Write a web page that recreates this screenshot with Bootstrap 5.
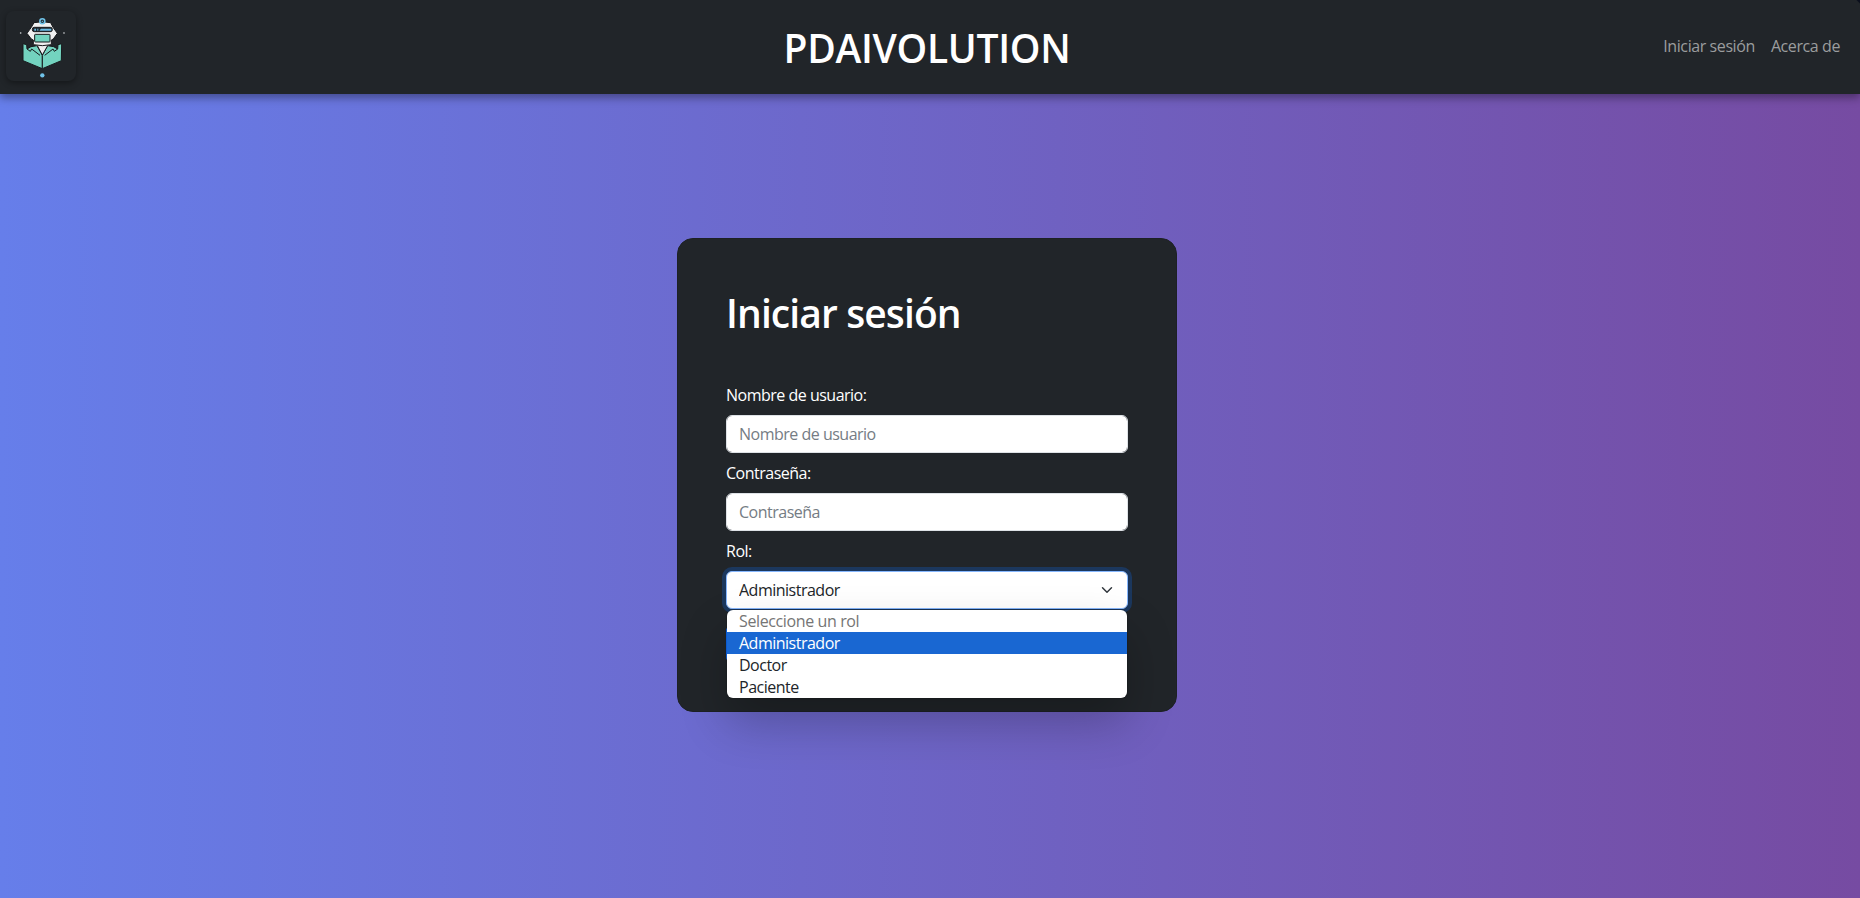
<!DOCTYPE html>
<html lang="es">
<head>
<meta charset="utf-8">
<title>PDAIVOLUTION</title>
<link rel="stylesheet" href="https://cdn.jsdelivr.net/npm/bootstrap@5.3.0/dist/css/bootstrap.min.css">
<style>
body{font-family:"Open Sans","Noto Sans",sans-serif;letter-spacing:-.5px;min-height:898px;overflow:hidden;background:linear-gradient(to right,#667eea,#764ba2)}
.topbar{height:94px;padding:0 20px 0 6px;background:linear-gradient(225deg,#0b0f1c 2px,#212529 3px);box-shadow:0 4px 8px rgba(0,0,0,.35)}
.side{width:240px}
.logo{width:70px;height:70px;margin-bottom:2px;border-radius:8px;box-shadow:0 2px 6px rgba(0,0,0,.4)}
.brand-title{font-size:39px;line-height:48px;font-weight:600;letter-spacing:-.3px;margin-left:8px;padding-top:1px}
.topbar a{color:#9b9d9e;text-decoration:none;letter-spacing:-.41px;padding-bottom:2px}
.login{width:500px;margin:144px auto 0;left:-3px;padding:48px;background:#212529;border:1px solid #1d2125;border-radius:16px}
.login h1{font-size:39px;line-height:48px;font-weight:600;letter-spacing:-.9px;padding-top:2px;margin-bottom:46px}
.form-label{display:block;color:#fff}
.form-control,.form-select{letter-spacing:-.5px;color:#212529}
.form-control::placeholder{color:#757c84}
.form-control{height:38px;margin-bottom:8px}
.form-select{height:38px;border-color:#86b7fe;box-shadow:0 0 0 .25rem rgba(13,110,253,.25)}
.options{top:100%;left:1px;right:1px;margin-top:1px;border-radius:6px;box-shadow:0 24px 48px rgba(0,0,0,.24),0 0 2px rgba(0,0,0,.4);color:#212529;z-index:3}
.options li{height:22px;line-height:22px;padding-left:12px}
.options .unset{color:#757575;letter-spacing:-.38px}
.options .chosen{background:#1967d2;color:#fff}
.send{width:130px;height:38px}
</style>
</head>
<body>
<header class="topbar position-relative d-flex align-items-center justify-content-between">
  <div class="side">
    <svg class="logo d-block" viewBox="18 32 210 210">
      <g stroke="#17191c" stroke-width="3" stroke-linejoin="round">
        <path d="M69 130l11 3 1 13 12-7 18-3 16 29v40l-58-24z" fill="#73d3bf"/>
        <path d="M185 130l-11 3-1 13-12-7-18-3-16 29v40l57-24z" fill="#73d3bf"/>
        <path d="M112 136l15 28 16-28-3-5h-25z" fill="#eee"/>
        <path d="M81 146l10 7 4-7 25 19M173 146l-10 7-4-7-25 19" fill="none"/>
        <path d="M102 67q25-5 50 0l7 14 13 18-12 17-6 3v14q-27 6-54 0v-14l-6-3-13-17 13-18z" fill="#f0f0f0"/>
        <rect x="97" y="81" width="60" height="13" rx="6" fill="#202a31"/>
        <rect x="104" y="102" width="46" height="23" rx="2" fill="#73d3bf"/>
      </g>
      <path d="M103 85h5v6h-5zM112 85h3v6h-3zM119 90l4-5h31v6h-35z" fill="#69bce5"/>
      <circle cx="127" cy="63" r="7.5" fill="#24313a" stroke="#70c3e9" stroke-width="4.5"/>
      <circle cx="127" cy="63" r="2" fill="#70c3e9"/>
      <circle cx="127" cy="225" r="6.5" fill="#70c3e9"/>
      <circle cx="62" cy="98" r="2.5" fill="#dce0e2"/><circle cx="192" cy="98" r="2.5" fill="#dce0e2"/>
    </svg>
  </div>
  <div class="brand-title text-white">PDAIVOLUTION</div>
  <nav class="side d-flex justify-content-end gap-3"><a href="#">Iniciar sesión</a><a href="#">Acerca de</a></nav>
</header>
<main>
  <form class="login position-relative">
    <h1 class="text-white">Iniciar sesión</h1>
    <label class="form-label" for="u">Nombre de usuario:</label>
    <input class="form-control" id="u" placeholder="Nombre de usuario">
    <label class="form-label" for="p">Contraseña:</label>
    <input class="form-control" id="p" type="password" placeholder="Contraseña">
    <label class="form-label" for="r">Rol:</label>
    <div class="position-relative">
      <select class="form-select" id="r"><option>Administrador</option></select>
      <ul class="options position-absolute bg-white list-unstyled mb-0 overflow-hidden">
        <li class="unset">Seleccione un rol</li>
        <li class="chosen">Administrador</li>
        <li>Doctor</li>
        <li>Paciente</li>
      </ul>
    </div>
    <button class="btn btn-primary send mt-3 d-block" type="button" aria-label="Entrar"></button>
  </form>
</main>
<script src="https://cdn.jsdelivr.net/npm/bootstrap@5.3.0/dist/js/bootstrap.bundle.min.js"></script>
</body>
</html>
